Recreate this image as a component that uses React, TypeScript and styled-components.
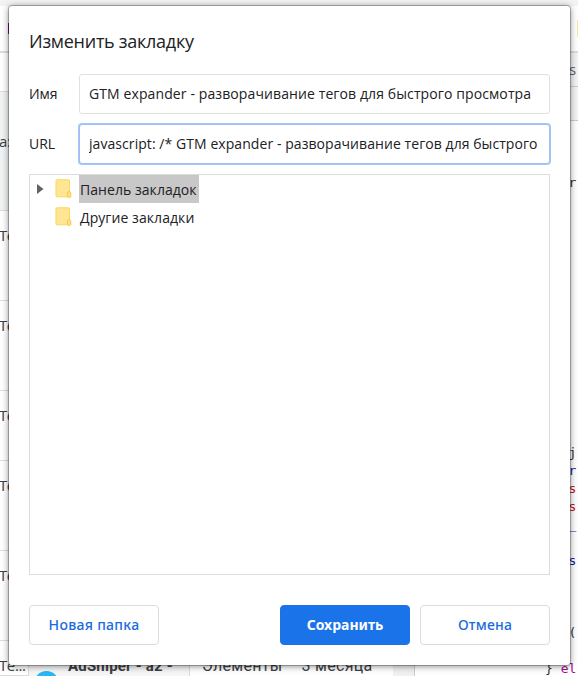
import React from 'react';
import styled, { createGlobalStyle } from 'styled-components';

const Global = createGlobalStyle`
  * { box-sizing: border-box; }
  body { margin: 0; overflow: hidden; background: #fff; }
  button, input { font: inherit; margin: 0; }
`;

const Screen = styled.div`
  position: relative;
  width: 578px;
  height: 676px;
  overflow: hidden;
  font-family: 'Open Sans', 'Noto Sans', sans-serif;
  color: #202124;
`;

/* Page behind the dialog */
const Page = styled.div`
  display: flex;
  flex-direction: column;
  height: 100%;
`;
const TopStrip = styled.div`
  height: 6px;
  background: #f1f3f4;
`;
const Header = styled.div`
  display: flex;
  justify-content: space-between;
  align-items: center;
  height: 47px;
  padding-left: 8px;
  border-bottom: 2px solid #dadce0;
`;
const Mark = styled.i<{ $color: string; $w: number; $h: number }>`
  width: ${p => p.$w}px;
  height: ${p => p.$h}px;
  background: ${p => p.$color};
`;
const Body = styled.div`
  display: grid;
  grid-template-columns: 28px 162px 203px 22px 1fr;
  grid-template-rows: 623px;
  height: 623px;
`;
const Sidebar = styled.div`
  display: flex;
  flex-direction: column;
  overflow: hidden;
  font: 15px/20px 'Open Sans', sans-serif;
  letter-spacing: -0.4px;
  color: #3c4043;
`;
const SideRow = styled.div<{ $h: number; $top?: number; $bg?: string }>`
  flex: none;
  height: ${p => p.$h}px;
  padding-top: ${p => p.$top ?? 14}px;
  background: ${p => p.$bg ?? '#fff'};
  border-bottom: 1px solid #dadce0;
  text-indent: -1px;
  white-space: nowrap;
  overflow: hidden;
`;
const Card = styled.div`
  display: flex;
  align-items: flex-end;
  gap: 9px;
  padding-left: 5px;
  background: #f6f6f6;
  border: solid #dadce0;
  border-width: 0 1px;
  overflow: hidden;
`;
const Avatar = styled.div`
  flex: none;
  width: 25px;
  height: 25px;
  margin-bottom: -20px;
  border-radius: 50%;
  background: #29b6f6;
`;
const CardTitle = styled.div`
  font: 700 15px/20px Roboto, sans-serif;
  color: #3c4043;
  letter-spacing: 0.2px;
  white-space: nowrap;
`;
const Details = styled.div`
  display: flex;
  align-items: flex-end;
  gap: 19px;
  padding-left: 12px;
  font: 16px/20px Roboto, sans-serif;
  letter-spacing: 0.3px;
  color: #3c4043;
  white-space: nowrap;
`;
const Gutter = styled.div`
  background: #f1f1f1;
  border-right: 1px solid #ccc;
`;
const Editor = styled.div`
  min-width: 0;
`;
const Tab = styled.div<{ $h: number }>`
  height: ${p => p.$h}px;
  padding: 6px 0 0 154px;
  background: #f3f3f3;
  border-bottom: 1px solid #ccc;
  font: 15px/20px 'Open Sans', sans-serif;
  color: #5f6368;
`;
const Code = styled.pre`
  margin: 53px 0 0 130px;
  font: 13px/18px 'DejaVu Sans Mono', monospace;
  color: #303030;
`;
const CodeLine = styled.div`
  height: 18px;
`;
const Tok = styled.span<{ $c: string }>`
  color: ${p => p.$c};
`;

/* Dialog */
const Dialog = styled.section`
  position: absolute;
  left: 9px;
  top: 6px;
  width: 561px;
  height: 659px;
  padding: 20px 20px;
  display: flex;
  flex-direction: column;
  background: #fff;
  border-radius: 3px;
  box-shadow: 0 0 0 1px rgba(0, 0, 0, 0.24), 0 1px 7px rgba(0, 0, 0, 0.5);
`;
const Title = styled.h1`
  margin: 0 0 18px;
  font-size: 18px;
  font-weight: 400;
  line-height: 30px;
  letter-spacing: -0.27px;
`;
const Field = styled.label`
  display: grid;
  grid-template-columns: 50px 1fr;
  align-items: center;
  height: 40px;
  margin-bottom: 10px;
  font-size: 14px;
`;
const Label = styled.span<{ $ls: number }>`
  padding-bottom: 2px;
  letter-spacing: ${p => p.$ls}px;
`;
const Input = styled.input<{ $focus?: boolean; $ls: number }>`
  width: 471px;
  height: 40px;
  padding: 0 9px 1px;
  border: 1px solid ${p => (p.$focus ? '#9cc0f3' : '#dfe1e5')};
  border-radius: 3px;
  box-shadow: ${p => (p.$focus ? '0 0 0 1px #a8c7f5' : 'none')};
  outline: none;
  color: #202124;
  background: #fff;
  letter-spacing: ${p => p.$ls}px;
`;
const Tree = styled.div`
  height: 401px;
  border: 1px solid #dadce0;
  font-size: 14px;
`;
const TreeRow = styled.div`
  display: grid;
  grid-template-columns: 24px 26px max-content;
  height: 28px;
  line-height: 27px;
`;
const Arrow = styled.svg`
  margin: 8px 0 0 6px;
`;
const TreeText = styled.span<{ $selected?: boolean; $ls: number }>`
  padding: 1px 0 0 1px;
  margin-left: -1px;
  width: 120px;
  white-space: nowrap;
  background: ${p => (p.$selected ? '#c8c8c8' : 'transparent')};
  letter-spacing: ${p => p.$ls}px;
`;
const Footer = styled.footer`
  display: flex;
  gap: 10px;
  margin-top: 30px;
`;
const Button = styled.button<{ $primary?: boolean; $ls: number }>`
  width: 130px;
  height: 40px;
  padding: 0 0 1px;
  border: 1px solid ${p => (p.$primary ? '#1a73e8' : '#dadce0')};
  border-radius: 4px;
  background: ${p => (p.$primary ? '#1a73e8' : '#fff')};
  color: ${p => (p.$primary ? '#fff' : '#1a6be0')};
  font-family: 'Noto Sans', 'Open Sans', sans-serif;
  font-size: 14px;
  font-weight: ${p => (p.$primary ? 700 : 500)};
  letter-spacing: ${p => p.$ls}px;
  &:first-child { margin-right: 111px; }
`;

const Folder = () => (
  <svg width="17" height="19" viewBox="0 0 17 19">
    <rect x="1" y="0.8" width="13.5" height="17" rx="1" fill="#ffe694" stroke="#fbd75b" />
    <path d="M12.5 17.8V13.5a1.8 1.8 0 0 1 3.2 0V16a1.8 1.8 0 0 1-3.2 1.8Z" fill="#ffe082" stroke="#f4c93f" />
  </svg>
);
const FolderBox = styled.span`
  display: flex;
  padding: 4px 0 0 1px;
  align-items: flex-start;
`;

const BLUE = '#1a1aa6';
const RED = '#c41a16';
const code: Record<number, [string, string]> = {
  0: ['   r', '#303030'],
  15: ['   j', '#303030'],
  16: ['   r', BLUE],
  17: ['   s', RED],
  18: ['   s', RED],
  19: ['   _', BLUE],
  21: ['   s', BLUE],
  25: ['   (', '#303030'],
};

export default function App() {
  return (
    <Screen>
      <Global />
      <Page>
        <TopStrip />
        <Header>
          <Mark $color="#881280" $w={2} $h={11} />
          <Mark $color="#fbe5a0" $w={1} $h={17} />
        </Header>
        <Body>
          <Sidebar>
            <SideRow $h={39} />
            <SideRow $h={119} $top={39} $bg="#f1f3f4">а:</SideRow>
            <SideRow $h={90}>Те...</SideRow>
            <SideRow $h={90}>Те...</SideRow>
            <SideRow $h={70}>Те...</SideRow>
            <SideRow $h={90}>Те...</SideRow>
            <SideRow $h={90}>Те...</SideRow>
            <SideRow $h={35}>Те...</SideRow>
          </Sidebar>
          <Card>
            <Avatar />
            <CardTitle>AdSniper - a2 -</CardTitle>
          </Card>
          <Details>
            <span>Элементы</span>
            <span>3 месяца</span>
          </Details>
          <Gutter />
          <Editor>
            <Tab $h={34}>s</Tab>
            <Tab $h={34} />
            <Code>
              {Array.from({ length: 27 }, (_, i) => (
                <CodeLine key={i}>{code[i] && <Tok $c={code[i][1]}>{code[i][0]}</Tok>}</CodeLine>
              ))}
              <CodeLine>{'} '}<Tok $c="#aa0d91">el</Tok></CodeLine>
            </Code>
          </Editor>
        </Body>
      </Page>

      <Dialog role="dialog">
        <Title>Изменить закладку</Title>
        <Field>
          <Label $ls={-0.1}>Имя</Label>
          <Input $ls={0.105} readOnly value="GTM expander - разворачивание тегов для быстрого просмотра" />
        </Field>
        <Field>
          <Label $ls={0}>URL</Label>
          <Input $ls={0.065} $focus readOnly value="javascript: /* GTM expander - разворачивание тегов для быстрого" />
        </Field>
        <Tree>
          <TreeRow>
            <Arrow width="8" height="12" viewBox="0 0 8 12">
              <path d="M1 1v10L7.5 6Z" fill="#5f6368" />
            </Arrow>
            <FolderBox><Folder /></FolderBox>
            <TreeText $selected $ls={0.05}>Панель закладок</TreeText>
          </TreeRow>
          <TreeRow>
            <span />
            <FolderBox><Folder /></FolderBox>
            <TreeText $ls={0.07}>Другие закладки</TreeText>
          </TreeRow>
        </Tree>
        <Footer>
          <Button $ls={0.3}>Новая папка</Button>
          <Button $primary $ls={0}>Сохранить</Button>
          <Button $ls={0.2}>Отмена</Button>
        </Footer>
      </Dialog>
    </Screen>
  );
}
